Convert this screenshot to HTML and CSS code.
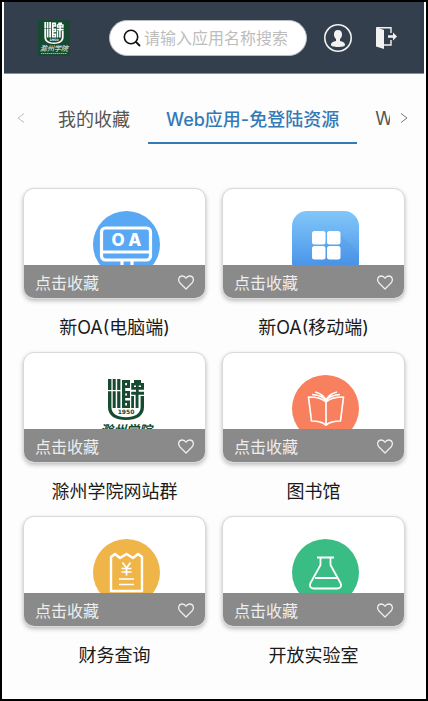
FILE: index.html
```html
<!DOCTYPE html>
<html lang="zh-CN">
<head>
    <meta charset="UTF-8">
    <meta name="viewport" content="width=device-width, initial-scale=1.0">
    <title>滁州学院</title>
    <link rel="stylesheet" href="styles.css">
</head>
<body>
    <svg class="defs" aria-hidden="true">
        <symbol id="heart" viewBox="0 0 16 15">
            <path d="M8 14 L2 8 C-.6 5 .8 1 4.3 1 C6 1 7.2 1.8 8 3.2 C8.800 1.800 10 1 11.700 1 C15.200 1 16.600 5 14 8 Z" fill="none" stroke="currentColor" stroke-width="1.300" stroke-linejoin="round"/>
        </symbol>
        <symbol id="emblem" viewBox="0 0 36 41">
            <g fill="currentColor">
                <path d="M0 0h3.400v11H0zM4.700 0h3v11h-3zM9.200 0h3.200v11H9.200z"/>
                <path d="M0 12.200h3.400V28c0 7 6 10.200 14.600 10.200S32.600 35 32.600 28V17H36v11c0 9-7.500 13-18 13S0 37 0 28z"/>
                <path d="M4.700 12.200h3V29h-3zM9.200 12.200h3.200V29H9.200z"/>
                <path d="M14 1h8v8h-4.800v3H22v7h-4.800v2.500H22V29h-8zM17.200 4v2.200h1.800V4zM17.200 14.500v2h1.800v-2zM17.200 24v2.500h1.800V24z" fill-rule="evenodd"/>
                <path d="M26 1h7v3h3v4h-3V6.500h-2.300V8H36v2.800h-5.300v2H36v3H23.200v-3h4.800v-2h-4.800V8H28V6.500h-2V8h-2.800V4H26z"/>
                <path d="M23.200 17H26v12h-2.800zM27.600 15h2.900v14h-2.900z"/>
            </g>
            <text x="18" y="35" text-anchor="middle" class="emblem-year" fill="currentColor">1950</text>
        </symbol>
    </svg>

    <header class="header">
        <a class="logo" href="#" aria-label="滁州学院">
            <svg viewBox="0 0 32 36">
                <rect width="32" height="36" fill="#164a31"/>
                <use href="#emblem" x="6" y="2" width="20" height="22"/>
                <text x="16" y="31" text-anchor="middle" class="logo-name">滁州学院</text>
                <path d="M3 33.500h26" stroke="#9db5a7" stroke-width="1" stroke-dasharray="1.500 .5"/>
            </svg>
        </a>
        <label class="search">
            <svg class="search-icon" viewBox="0 0 18 18" aria-hidden="true">
                <circle cx="8" cy="8" r="6.700" fill="none" stroke="#111" stroke-width="1.600"/>
                <path d="M13 13l3.500 3.500" stroke="#111" stroke-width="1.800" stroke-linecap="round"/>
            </svg>
            <input type="text" placeholder="请输入应用名称搜索" aria-label="搜索应用">
        </label>
        <button class="icon-btn user" aria-label="用户">
            <svg viewBox="0 0 28 28" width="28" height="28">
                <circle cx="14" cy="14" r="13.200" fill="none" stroke="#f2f2f2" stroke-width="1.600"/>
                <path d="M14 6c-3 0-4.300 2-4 5 .2 2 1 3.300 2 4v2c-2.500.6-5 1.400-5 4 0 1.300 3 2 7 2s7-.7 7-2c0-2.600-2.500-3.400-5-4v-2c1-.7 1.800-2 2-4 .3-3-1-5-4-5z" fill="#f2f2f2"/>
            </svg>
        </button>
        <button class="icon-btn exit" aria-label="退出">
            <svg viewBox="0 0 21 22" width="21" height="22">
                <path d="M0 0l8 3v19l-8-2.500z" fill="#f2f2f2"/>
                <path d="M1 .7h14V6M15 13v5H8" fill="none" stroke="#f2f2f2" stroke-width="1.400"/>
                <path d="M12 8.300h5V5.500l4 4-4 4v-2.800h-5z" fill="#f2f2f2"/>
            </svg>
        </button>
    </header>

    <nav class="tabs">
        <button class="tab-arrow prev" aria-label="上一页">
            <svg viewBox="0 0 8 10" width="8" height="10"><path d="M7 .5L1 5l6 4.500" fill="none" stroke="currentColor"/></svg>
        </button>
        <div class="tab-list">
            <button class="tab">我的收藏</button>
            <button class="tab active">Web应用-免登陆资源</button>
            <button class="tab">W</button>
        </div>
        <button class="tab-arrow next" aria-label="下一页">
            <svg viewBox="0 0 8 10" width="8" height="10"><path d="M1 .5L7 5 1 9.500" fill="none" stroke="currentColor"/></svg>
        </button>
    </nav>

    <main class="apps">
        <article class="app">
            <div class="card">
                <svg class="app-icon" viewBox="0 0 67 67">
                    <circle cx="33.500" cy="33.500" r="33.500" fill="#58a8f3"/>
                    <rect x="8.500" y="17" width="49" height="32" rx="4" fill="none" stroke="#fff" stroke-width="3.200"/>
                    <path d="M9 41h48M29 50v8M39 50v8" stroke="#fff" stroke-width="3.200"/>
                    <text x="33.500" y="35" text-anchor="middle" class="oa">O A</text>
                </svg>
                <button class="fav">点击收藏<svg class="heart"><use href="#heart"/></svg></button>
            </div>
            <a class="app-name" href="#">新OA(电脑端)</a>
        </article>
        <article class="app">
            <div class="card">
                <svg class="app-icon" viewBox="0 0 67 67">
                    <defs>
                        <linearGradient id="blue" x1="0" y1="0" x2="0" y2="1">
                            <stop offset="0" stop-color="#82c7f8"/>
                            <stop offset=".8" stop-color="#4b96ea"/>
                            <stop offset="1" stop-color="#438de6"/>
                        </linearGradient>
                    </defs>
                    <rect width="67" height="67" rx="15" fill="url(#blue)"/>
                    <path d="M47 22l20 20v25H41L22 48z" fill="#3c86dc" opacity=".15"/>
                    <g fill="#fff">
                        <rect x="20" y="20" width="13.500" height="13.500" rx="2.500"/>
                        <rect x="35" y="20" width="13.500" height="13.500" rx="2.500"/>
                        <rect x="20" y="35" width="13.500" height="13.500" rx="2.500"/>
                        <rect x="35" y="35" width="13.500" height="13.500" rx="2.500"/>
                    </g>
                </svg>
                <button class="fav">点击收藏<svg class="heart"><use href="#heart"/></svg></button>
            </div>
            <a class="app-name" href="#">新OA(移动端)</a>
        </article>
        <article class="app">
            <div class="card">
                <svg class="app-icon school" viewBox="0 0 67 67">
                    <use href="#emblem" x="15" y="4" width="36" height="41"/>
                    <text x="33" y="60" text-anchor="middle" class="school-name">滁州学院</text>
                </svg>
                <button class="fav">点击收藏<svg class="heart"><use href="#heart"/></svg></button>
            </div>
            <a class="app-name" href="#">滁州学院网站群</a>
        </article>
        <article class="app">
            <div class="card">
                <svg class="app-icon" viewBox="0 0 67 67">
                    <circle cx="33.500" cy="33.500" r="33.500" fill="#f8805e"/>
                    <g fill="none" stroke="#fff" stroke-width="1.700" stroke-linejoin="round">
                        <path d="M34 27c-4-4-10-5-17.500-5l3 24c6 0 11 1 14.500 4 3.500-3 8-4 14.500-4l3-24C44 22 38 23 34 27zV50"/>
                        <path d="M34 26c-2-4-7-6-14-6.500M34 26c-1.500-5-5-7.500-11-9M34 26c2-4 7-6 14-6.500M34 26c1.500-5 5-7.500 11-9"/>
                    </g>
                </svg>
                <button class="fav">点击收藏<svg class="heart"><use href="#heart"/></svg></button>
            </div>
            <a class="app-name" href="#">图书馆</a>
        </article>
        <article class="app">
            <div class="card">
                <svg class="app-icon" viewBox="0 0 67 67">
                    <circle cx="33.500" cy="33.500" r="33.500" fill="#f0b548"/>
                    <g fill="none" stroke="#fff" stroke-width="2">
                        <path d="M18 52V18l4-3 5 4 6.500-4 6.500 4 5-4 4 3v34z" stroke-width="2.400" stroke-linejoin="round"/>
                        <path d="M29.500 23.500l4 5.500 4-5.500M33.500 29v7.500M28.500 29.500h10M28.500 33h10" stroke-width="1.700"/>
                        <path d="M26 40h15M26 45.500h15" stroke-width="1.600"/>
                    </g>
                </svg>
                <button class="fav">点击收藏<svg class="heart"><use href="#heart"/></svg></button>
            </div>
            <a class="app-name" href="#">财务查询</a>
        </article>
        <article class="app">
            <div class="card">
                <svg class="app-icon" viewBox="0 0 67 67">
                    <circle cx="33.500" cy="33.500" r="33.500" fill="#39bd84"/>
                    <g fill="none" stroke="#fff" stroke-width="1.800" stroke-linejoin="round">
                        <path d="M25 18.500h17M28.500 19v7L18.500 44c-1.500 3 0 5.500 3 5.500h24c3 0 4.500-2.500 3-5.500l-10-18v-7M23 39h22"/>
                    </g>
                </svg>
                <button class="fav">点击收藏<svg class="heart"><use href="#heart"/></svg></button>
            </div>
            <a class="app-name" href="#">开放实验室</a>
        </article>
    </main>
</body>
</html>
```

FILE: styles.css
```css
* {
    box-sizing: border-box;
}

body {
    margin: 0;
    min-height: 100vh;
    border: 2px solid #000;
    background-color: #fdfdfd;
    font-family: Inter, "Noto Sans CJK SC", sans-serif;
    color: #1a1a1a;
}

button {
    border: 0;
    padding: 0;
    background: none;
    font: inherit;
    color: inherit;
    cursor: pointer;
}

svg {
    display: block;
}

.defs {
    display: none;
}

/* header */
.header {
    display: flex;
    align-items: center;
    height: 72px;
    margin: 0 2px;
    padding: 0 27px 0 34px;
    background-color: #343f4e;
    border-bottom: 1px solid #8a919a;
}

.logo {
    width: 32px;
    color: #fff;
}

.logo-name {
    font-family: "Noto Sans CJK SC", sans-serif;
    font-size: 7px;
    font-style: italic;
    fill: #fff;
}

.emblem-year {
    font-family: "DejaVu Sans", sans-serif;
    font-size: 6px;
    font-weight: bold;
}

.search {
    display: flex;
    flex: 1;
    align-items: center;
    gap: 3px;
    min-width: 0;
    height: 36px;
    margin: 0 17px 0 39px;
    padding: 0 13px;
    border: 1px solid #b8bcc4;
    border-radius: 18px;
    background-color: #fff;
}

.search-icon {
    flex: none;
    width: 18px;
    height: 18px;
}

.search input {
    flex: 1;
    min-width: 0;
    padding: 0;
    border: 0;
    outline: 0;
    background: none;
    font: inherit;
    font-size: 16px;
}

.search input::placeholder {
    color: #bdbdbd;
}

.exit {
    margin-left: 24px;
}

/* tabs */
.tabs {
    display: flex;
    height: 50px;
    margin: 20px 0 44px;
}

.tab-arrow {
    display: flex;
    flex: none;
    align-items: center;
    justify-content: center;
    width: 38px;
    height: 48px;
    color: #777;
}

.prev {
    color: #bbb;
}

.next {
    width: 36px;
    padding-right: 8px;
}

.tab-list {
    display: flex;
    flex: 1;
    min-width: 0;
    overflow: hidden;
}

.tab {
    flex: none;
    padding: 0 18px;
    border-bottom: 2px solid transparent;
    font-size: 18px;
    color: #555;
    white-space: nowrap;
}

.tab.active {
    border-bottom-color: #337ab7;
    font-weight: 500;
    color: #337ab7;
}

/* app cards */
.apps {
    display: grid;
    grid-template-columns: 1fr 1fr;
    column-gap: 16px;
    padding: 0 21px;
}

.card {
    display: flex;
    justify-content: center;
    height: 111px;
    padding: 22px 0 0 24px;
    border: 1px solid #d9d9d9;
    border-radius: 11px;
    background-color: #fff;
    box-shadow: 0 2px 4px rgba(0, 0, 0, 0.25);
    overflow: hidden;
    position: relative;
}

.app-icon {
    flex: none;
    width: 67px;
    height: 67px;
}

.school {
    color: #164a31;
}

.school-name {
    font-family: "Noto Sans CJK SC", sans-serif;
    font-size: 13px;
    font-style: italic;
    font-weight: bold;
    fill: currentColor;
}

.oa {
    font-size: 17px;
    font-weight: 800;
    fill: #fff;
}

/* favourite bar over the lower part of the icon */
.fav {
    position: absolute;
    left: -1px;
    right: -1px;
    bottom: -1px;
    display: flex;
    align-items: center;
    justify-content: space-between;
    height: 34px;
    padding: 0 12px;
    background-color: #8a8a8a;
    font-size: 16px;
    color: #eee;
}

.heart {
    width: 16px;
    height: 15px;
}

.app-name {
    display: block;
    padding: 17px 0 12px;
    font-size: 18px;
    line-height: 24px;
    text-align: center;
    color: inherit;
    text-decoration: none;
}
```
